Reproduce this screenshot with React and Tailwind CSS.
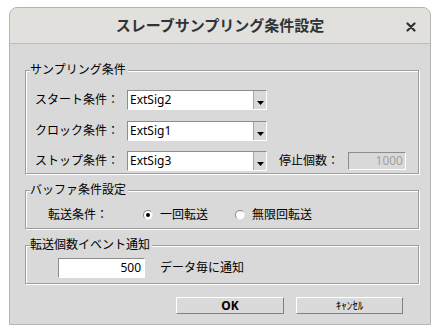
import React from "react";

const sunken = "border border-t-[#8c8c8c] border-l-[#8c8c8c] border-r-white border-b-white";

function Arrow() {
  return (
    <svg width="7" height="4" viewBox="0 0 7 4" className="block">
      <polygon points="0,0 7,0 3.5,4" fill="#000" />
    </svg>
  );
}

function Combo({ value }) {
  return (
    <div className={`flex h-5 w-[140px] ${sunken}`}>
      <div className="flex flex-1 items-center bg-white pl-[2px] text-[12px] text-black">{value}</div>
      <div className="flex w-[13px] items-end justify-center border-l border-[#a8a8a8] bg-[#d9d9d9] pb-[4px]">
        <Arrow />
      </div>
    </div>
  );
}

function Radio({ checked, label }) {
  return (
    <div className="flex items-center gap-[7px]">
      <span className="flex h-[10px] w-[10px] items-center justify-center rounded-full border border-t-[#8c8c8c] border-l-[#8c8c8c] border-r-[#e6e6e6] border-b-[#e6e6e6] bg-white">
        {checked && <span className="h-[4px] w-[4px] rounded-full bg-black" />}
      </span>
      <span>{label}</span>
    </div>
  );
}

function Group({ title, className, children }) {
  return (
    <fieldset
      className={`border border-[#9c9c9c] shadow-[inset_1px_1px_0_#fff,1px_1px_0_#fff] ${className}`}
    >
      <legend className="ml-1 bg-[#d9d9d9] pr-[2px] text-[12px] leading-4 text-black">{title}</legend>
      {children}
    </fieldset>
  );
}

export default function App() {
  return (
    <div className="h-[335px] w-[440px] bg-white pl-[9px] pt-[7px] font-['Noto_Sans','Noto_Sans_CJK_JP',sans-serif] text-[12px] text-black">
      <div className="h-[318px] w-[422px] overflow-hidden rounded-t-[8px] border border-[#b4b4b2] bg-[#d9d9d9]">
        <div className="relative flex h-[36px] items-center justify-center border-b border-[#c0beba] bg-[#e2e0dd]">
          <span className="text-[15px] font-bold text-[#2e3436]">スレーブサンプリング条件設定</span>
          <svg
            width="10"
            height="10"
            viewBox="0 0 10 10"
            className="absolute right-[14px] top-[14px]"
          >
            <path d="M1.5 1.5 L8.5 8.5 M8.5 1.5 L1.5 8.5" stroke="#2e3436" strokeWidth="2.2" strokeLinecap="round" />
          </svg>
        </div>

        <div className="flex flex-col pl-[15px] pr-[11px] pt-[18px]">
          <Group title="サンプリング条件" className="pb-[2px]">
            <div className="mt-[12px] flex flex-col gap-[10.5px] pl-[9px]">
              <div className="flex h-5 items-center">
                <span className="w-[92px]">スタート条件：</span>
                <Combo value="ExtSig2" />
              </div>
              <div className="flex h-5 items-center">
                <span className="w-[92px]">クロック条件：</span>
                <Combo value="ExtSig1" />
              </div>
              <div className="flex h-5 items-center">
                <span className="w-[92px]">ストップ条件：</span>
                <Combo value="ExtSig3" />
                <span className="ml-[12px] w-[69px]">停止個数：</span>
                <div className={`flex h-[18px] w-[58px] items-center justify-end bg-[#d9d9d9] pr-[2px] text-[#a2a2a2] ${sunken}`}>
                  1000
                </div>
              </div>
            </div>
          </Group>

          <Group title="バッファ条件設定" className="mt-[8px] pb-[3px]">
            <div className="mt-[7px] flex h-5 items-center pl-[22px]">
              <span className="w-[95px]">転送条件：</span>
              <div className="w-[92px]">
                <Radio checked label="一回転送" />
              </div>
              <Radio label="無限回転送" />
            </div>
          </Group>

          <Group title="転送個数イベント通知" className="mt-[8px] pb-[5px]">
            <div className="mt-[5px] flex h-5 items-center pl-[32px]">
              <div className={`flex h-5 w-[87px] items-center justify-end bg-white pr-[3px] ${sunken}`}>500</div>
              <span className="ml-[15px]">データ毎に通知</span>
            </div>
          </Group>

          <div className="mt-[13px] flex gap-[12px] pl-[151px]">
            <button className="flex h-[17px] w-[108px] items-center justify-center border border-t-white border-l-white border-r-[#808080] border-b-[#808080] bg-[#dadada] text-[12px] font-bold leading-none">
              OK
            </button>
            <button className="flex h-[17px] w-[107px] items-center justify-center border border-t-white border-l-white border-r-[#808080] border-b-[#808080] bg-[#dadada] text-[11px] leading-none">
              ｷｬﾝｾﾙ
            </button>
          </div>
        </div>
      </div>
    </div>
  );
}
